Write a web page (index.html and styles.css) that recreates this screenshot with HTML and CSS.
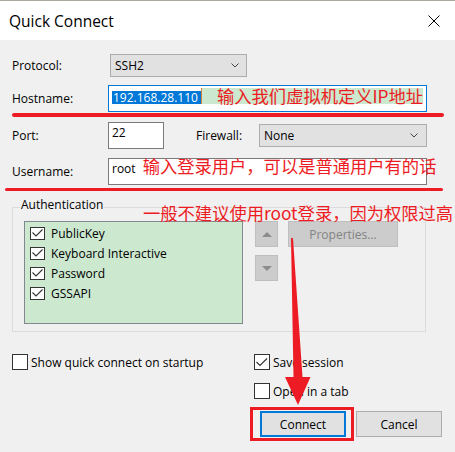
FILE: index.html
```html
<!DOCTYPE html>
<html lang="zh">
<head>
<meta charset="utf-8">
<title>Quick Connect</title>
<link rel="stylesheet" href="styles.css">
</head>
<body>
<div class="dialog">
  <header class="titlebar">
    <span class="title">Quick Connect</span>
    <svg class="close-icon" width="12" height="12" viewBox="0 0 12 12"><path d="M0.5 0.5 L11.5 11.5 M11.5 0.5 L0.5 11.5"/></svg>
  </header>
  <main class="content">
    <div class="row row-protocol">
      <span class="label">Protocol:</span>
      <div class="select select-protocol"><span>SSH2</span><svg class="chevron" width="8" height="5" viewBox="0 0 8 5"><path d="M0.5 0.5 L4 4 L7.5 0.5"/></svg></div>
    </div>
    <div class="row row-host">
      <span class="label">Hostname:</span>
      <div class="field field-wide field-focus"><span class="selection">192.168.28.110</span><span class="note note-host">输入我们虚拟机定义IP地址</span></div>
    </div>
    <div class="row row-port">
      <span class="label">Port:</span>
      <div class="field field-port">22</div>
      <span class="label label-firewall">Firewall:</span>
      <div class="select select-firewall"><span>None</span><svg class="chevron" width="8" height="5" viewBox="0 0 8 5"><path d="M0.5 0.5 L4 4 L7.5 0.5"/></svg></div>
    </div>
    <div class="row row-user">
      <span class="label">Username:</span>
      <div class="field field-wide field-user">root<span class="note note-user">输入登录用户，可以是普通用户有的话</span></div>
    </div>
    <fieldset class="auth">
      <legend>Authentication</legend>
      <div class="auth-body">
        <ul class="auth-list">
          <li><span class="checkbox checkbox-list"><svg width="13" height="11" viewBox="0 0 13 11"><path d="M1.5 4.5 L5 8 L11.5 1.5"/></svg></span>PublicKey</li>
          <li><span class="checkbox checkbox-list"><svg width="13" height="11" viewBox="0 0 13 11"><path d="M1.5 4.5 L5 8 L11.5 1.5"/></svg></span>Keyboard Interactive</li>
          <li><span class="checkbox checkbox-list"><svg width="13" height="11" viewBox="0 0 13 11"><path d="M1.5 4.5 L5 8 L11.5 1.5"/></svg></span>Password</li>
          <li><span class="checkbox checkbox-list"><svg width="13" height="11" viewBox="0 0 13 11"><path d="M1.5 4.5 L5 8 L11.5 1.5"/></svg></span>GSSAPI</li>
        </ul>
        <div class="order-buttons">
          <button class="btn-arrow" type="button"><svg width="10" height="5" viewBox="0 0 10 5"><path d="M0 5 L5 0 L10 5 Z"/></svg></button>
          <button class="btn-arrow" type="button"><svg width="10" height="5" viewBox="0 0 10 5"><path d="M0 0 L10 0 L5 5 Z"/></svg></button>
        </div>
        <button class="btn-props" type="button">Properties...</button>
      </div>
    </fieldset>
    <div class="options">
      <div class="option"><span class="checkbox"></span>Show quick connect on startup</div>
      <div class="option"><span class="checkbox"><svg width="14" height="14" viewBox="0 0 14 14"><path d="M1.5 7 L5 10.5 L12 3.5"/></svg></span>Save session</div>
      <div></div>
      <div class="option"><span class="checkbox"></span>Open in a tab</div>
    </div>
    <div class="buttons">
      <button class="btn btn-default" type="button">Connect</button>
      <button class="btn" type="button">Cancel</button>
    </div>
  </main>
  <div class="mark-line mark-line-host"></div>
  <div class="mark-line mark-line-user"></div>
  <span class="note note-auth">一般不建议使用root登录，因为权限过高</span>
  <svg class="mark-arrow" width="455" height="452" viewBox="0 0 455 452"><path d="M291 238.5 Q292 237 293 238.5 L302.5 377 L310.5 377 L298 405 L285 377 L293.5 377 Z"/></svg>
  <div class="mark-box"></div>
</div>
</body>
</html>
```

FILE: styles.css
```css
html, body {
  margin: 0;
  padding: 0;
}

body {
  background: #f0f0f0;
  font-family: "Open Sans", "Noto Sans", sans-serif;
  font-size: 12px;
  color: #000;
}

.dialog {
  position: relative;
  width: 455px;
  height: 452px;
  overflow: hidden;
  background: #f0f0f0;
}

/* title bar */
.titlebar {
  height: 40px;
  box-sizing: border-box;
  border-top: 1px solid #aca899;
  background: #fff;
  display: flex;
  align-items: center;
  justify-content: space-between;
  padding: 0 15px 0 9px;
}

.title {
  font-size: 15.5px;
  line-height: 20px;
}

.close-icon path {
  stroke: #000;
  stroke-width: 1;
  fill: none;
}

/* form */
.content {
  display: block;
  padding: 0 12px;
}

.row {
  display: flex;
  align-items: center;
  height: 27px;
}

.label {
  flex: none;
  width: 96px;
}

.row-protocol {
  margin-top: 14px;
  height: 23px;
}

.row-host {
  margin-top: 8px;
}

.row-port {
  margin-top: 10px;
}

.row-user {
  margin-top: 9px;
}

.select {
  flex: none;
  box-sizing: border-box;
  height: 23px;
  display: flex;
  align-items: center;
  justify-content: space-between;
  border: 1px solid #adadad;
  background: #e1e1e1;
  padding: 0 7px 0 4px;
}

.select-protocol {
  margin-left: 2px;
  width: 137px;
}

.select-firewall {
  width: 168px;
  padding-right: 8px;
}

.chevron path {
  fill: none;
  stroke: #444;
  stroke-width: 1;
}

.field {
  flex: none;
  box-sizing: border-box;
  height: 27px;
  border: 1px solid #7a7a7a;
  background: #fff;
  white-space: nowrap;
}

.field-wide {
  width: 319px;
}

.field-focus {
  border-color: #0078d7;
  display: flex;
  align-items: flex-start;
  padding: 2px 0 0 3px;
}

.selection {
  box-sizing: border-box;
  width: 89px;
  margin-top: 3px;
  height: 13px;
  line-height: 13px;
  padding-left: 1px;
  background: #0078d7;
  color: #fff;
}

.note {
  font-family: "Noto Sans CJK SC", "Noto Sans", sans-serif;
  font-size: 17.3px;
  color: #ed1c24;
  white-space: nowrap;
}

.note-host {
  box-sizing: border-box;
  width: 222px;
  height: 16px;
  line-height: 16px;
  padding-left: 15px;
  border-left: 1px solid #d6823a;
  background: #cce8cf;
  overflow: visible;
}

.field-user,
.field-port {
  padding: 2px 3px 0;
  line-height: 16px;
}

.field-port {
  width: 56px;
}

.note-user {
  line-height: 0;
  margin-left: 7px;
}

.label-firewall {
  width: 63px;
  margin-left: 32px;
}

/* authentication group */
.auth {
  margin: 13px 0 0;
  width: 414px;
  min-width: 0;
  box-sizing: border-box;
  border: 1px solid #dcdcdc;
  padding: 5px 0 7px 11px;
}

.auth legend {
  margin-left: -4px;
  padding: 0 1px 4px;
  line-height: 14px;
}

.auth-body {
  display: flex;
  align-items: flex-start;
}

.auth-list {
  margin: 0;
  list-style: none;
  box-sizing: border-box;
  width: 219px;
  height: 103px;
  padding: 1px 0 0 5px;
  border: 1px solid #828790;
  background: #cce8cf;
}

.auth-list li {
  display: flex;
  align-items: center;
  gap: 6px;
  height: 20px;
}

.checkbox {
  flex: none;
  box-sizing: border-box;
  width: 16px;
  height: 16px;
  border: 1px solid #333;
  background: #fff;
  display: flex;
  align-items: center;
  justify-content: center;
}

.checkbox-list {
  width: 15px;
  height: 13px;
}

.checkbox path {
  fill: none;
  stroke: #333;
  stroke-width: 1.1;
}

.order-buttons {
  display: flex;
  flex-direction: column;
  gap: 8px;
  margin-left: 12px;
}

.btn-arrow {
  box-sizing: border-box;
  width: 23px;
  height: 26px;
  padding: 0;
  border: 1px solid #bfbfbf;
  background: #cccccc;
  display: flex;
  align-items: center;
  justify-content: center;
}

.btn-arrow path {
  fill: #8c8c8c;
}

.btn-props {
  box-sizing: border-box;
  margin-left: 10px;
  width: 110px;
  height: 26px;
  padding: 0;
  border: 1px solid #bfbfbf;
  background: #cccccc;
  color: #838383;
  font: inherit;
}

/* bottom */
.options {
  margin-top: 22px;
  display: grid;
  grid-template-columns: 242px auto;
  row-gap: 13px;
}

.option {
  display: flex;
  align-items: center;
  gap: 3px;
  height: 16px;
  white-space: nowrap;
}

.buttons {
  margin-top: 12px;
  display: flex;
  justify-content: flex-end;
  gap: 10px;
  padding-right: 1px;
}

.btn {
  box-sizing: border-box;
  width: 86px;
  height: 26px;
  padding: 0;
  border: 1px solid #adadad;
  background: #e1e1e1;
  color: #000;
  font: inherit;
}

.btn-default {
  border: 2px solid #0078d7;
}

/* red annotations */
.mark-line {
  position: absolute;
  background: #ed1c24;
  border-radius: 2px;
}

.mark-line-host {
  left: 12px;
  top: 113px;
  width: 432px;
  height: 4px;
}

.mark-line-user {
  left: 5px;
  top: 188px;
  width: 438px;
  height: 3px;
}

.note-auth {
  position: absolute;
  left: 143px;
  top: 203px;
  line-height: 20px;
}

.mark-arrow {
  position: absolute;
  left: 0;
  top: 0;
  pointer-events: none;
}

.mark-arrow path {
  fill: #ed1c24;
}

.mark-box {
  position: absolute;
  left: 250px;
  top: 407px;
  width: 104px;
  height: 34px;
  box-sizing: border-box;
  border: 3px solid #ed1c24;
}
```
